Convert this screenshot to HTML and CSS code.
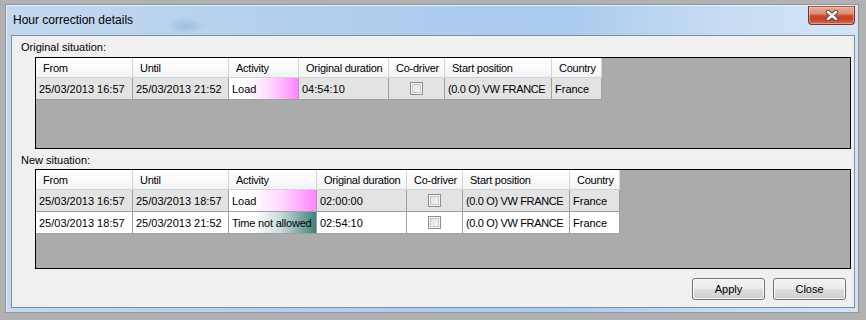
FILE: index.html
```html
<!DOCTYPE html>
<html>
  <head>
    <link rel="stylesheet" href="styles.css">
  </head>
  <body>
    <div class="window">
      <div class="titlebar">
        <div class="title">Hour correction details</div>
        <div class="close-btn">
          <svg width="14" height="11" viewBox="0 0 14 11">
            <path d="M3 2 L11 9 M11 2 L3 9" stroke="#4a4a4a" stroke-width="4.4" stroke-linecap="round" fill="none" />
            <path d="M3 2 L11 9 M11 2 L3 9" stroke="#ffffff" stroke-width="2.4" stroke-linecap="round" fill="none" />
          </svg>
        </div>
      </div>

      <div class="client">
        <div class="section-label">Original situation:</div>
        <div class="grid grid-original">
          <div class="row header">
            <div class="cell c-from">From</div>
            <div class="cell c-until">Until</div>
            <div class="cell c-act1">Activity</div>
            <div class="cell c-dur">Original duration</div>
            <div class="cell c-co">Co-driver</div>
            <div class="cell c-pos">Start position</div>
            <div class="cell c-country">Country</div>
          </div>
          <div class="row data shaded">
            <div class="cell c-from">25/03/2013 16:57</div>
            <div class="cell c-until">25/03/2013 21:52</div>
            <div class="cell c-act1 load">Load</div>
            <div class="cell c-dur">04:54:10</div>
            <div class="cell c-co"><span class="checkbox"></span></div>
            <div class="cell c-pos">(0.0 O) VW FRANCE</div>
            <div class="cell c-country">France</div>
          </div>
        </div>

        <div class="section-label second">New situation:</div>
        <div class="grid grid-new">
          <div class="row header">
            <div class="cell c-from">From</div>
            <div class="cell c-until">Until</div>
            <div class="cell c-act2">Activity</div>
            <div class="cell c-dur">Original duration</div>
            <div class="cell c-co">Co-driver</div>
            <div class="cell c-pos">Start position</div>
            <div class="cell c-country">Country</div>
          </div>
          <div class="row data shaded">
            <div class="cell c-from">25/03/2013 16:57</div>
            <div class="cell c-until">25/03/2013 18:57</div>
            <div class="cell c-act2 load">Load</div>
            <div class="cell c-dur">02:00:00</div>
            <div class="cell c-co"><span class="checkbox"></span></div>
            <div class="cell c-pos">(0.0 O) VW FRANCE</div>
            <div class="cell c-country">France</div>
          </div>
          <div class="row data">
            <div class="cell c-from">25/03/2013 18:57</div>
            <div class="cell c-until">25/03/2013 21:52</div>
            <div class="cell c-act2 not-allowed">Time not allowed</div>
            <div class="cell c-dur">02:54:10</div>
            <div class="cell c-co"><span class="checkbox"></span></div>
            <div class="cell c-pos">(0.0 O) VW FRANCE</div>
            <div class="cell c-country">France</div>
          </div>
        </div>

        <div class="buttons">
          <button class="btn">Apply</button>
          <button class="btn">Close</button>
        </div>
      </div>
    </div>
  </body>
</html>
```

FILE: styles.css
```css
body {
  margin: 0;
  background: #b1b1b1;
  font-family: "Liberation Sans", Arial, sans-serif;
  font-size: 11px;
  color: #000;
}

.window {
  margin: 4px 0 0 5px;
  width: 854px;
  height: 309px;
  box-sizing: border-box;
  border: 1px solid #8d98a4;
  background:
    radial-gradient(ellipse 20px 8px at 180px 21px, rgba(140, 178, 218, 0.65), rgba(140, 178, 218, 0) 100%),
    linear-gradient(to right, #c3d8ee 0%, #b2cfee 35%, #a9cbee 65%, #c8ddf3 85%, #d3e4f5 100%);
  box-shadow: inset 1px 1px 0 #e4eef9;
  display: flex;
  flex-direction: column;
}

.titlebar {
  height: 30px;
  display: flex;
  justify-content: space-between;
  align-items: center;
  padding-left: 7px;
  padding-right: 3px;
}

.title {
  font-size: 12px;
  color: #000;
  margin-top: -1px;
}

.close-btn {
  align-self: flex-start;
  margin-top: 1px;
  width: 47px;
  height: 19px;
  box-sizing: border-box;
  border: 1px solid #7a3526;
  border-top-color: #9a5a4c;
  border-radius: 0 0 4px 4px;
  background: linear-gradient(#e8aa98 0%, #dc8d76 40%, #c8472d 52%, #c4452c 75%, #d37058 100%);
  box-shadow: inset 0 0 0 1px rgba(255, 210, 195, 0.45);
  display: flex;
  align-items: center;
  justify-content: center;
}

.client {
  margin-left: 5px;
  width: 844px;
  height: 273px;
  box-sizing: border-box;
  border: 1px solid #7f8fa1;
  background: #f0f0f0;
  padding: 5px 3px 0 9px;
  display: flex;
  flex-direction: column;
}

.section-label {
  line-height: 13px;
  height: 13px;
}

.section-label.second {
  margin-top: 5px;
}

.grid {
  margin-left: 14px;
  box-sizing: border-box;
  border: 1px solid #000;
  background: #ababab;
}

.grid-original {
  margin-top: 3px;
  height: 92px;
}

.grid-new {
  margin-top: 2px;
  height: 100px;
}

.row {
  display: flex;
}

.cell {
  box-sizing: border-box;
  white-space: nowrap;
  overflow: hidden;
  display: flex;
  align-items: center;
}

.header .cell {
  height: 20px;
  padding-left: 7px;
  letter-spacing: -0.25px;
  background: linear-gradient(#ffffff 0%, #fbfbfc 50%, #f1f2f4 100%);
  border-right: 1px solid #d5d5d5;
  border-bottom: 1px solid #d5d5d5;
}

.data .cell {
  height: 22px;
  padding-left: 3px;
  background: #ffffff;
  border-right: 1px solid #a0a0a0;
  border-bottom: 1px solid #a0a0a0;
}

.data .c-pos {
  letter-spacing: -0.35px;
}

.data.shaded .cell {
  background: #e3e3e3;
}

.data .cell.load {
  background: linear-gradient(to right, #ffffff 25%, #ffd8ff 60%, #ff85ff 100%);
}

.data .cell.not-allowed {
  letter-spacing: -0.2px;
  background: linear-gradient(to right, #ffffff 30%, #c6dad9 60%, #3f807d 100%);
}

.data .c-co {
  justify-content: center;
  padding-left: 0;
}

.checkbox {
  width: 13px;
  height: 13px;
  box-sizing: border-box;
  border: 1px solid #8e8f8f;
  background: linear-gradient(135deg, #dcdcdc 0%, #eeeeee 60%, #fafafa 100%);
  box-shadow: inset 0 0 0 1px #f4f4f4, inset 0 0 0 2px #c7c7c7;
}

.c-from { width: 97px; }
.c-until { width: 96px; }
.c-act1 { width: 70px; }
.c-act2 { width: 88px; }
.c-dur { width: 90px; }
.c-co { width: 56px; }
.c-pos { width: 107px; }
.c-country { width: 50px; }

.buttons {
  margin-top: 9px;
  margin-right: 5px;
  display: flex;
  justify-content: flex-end;
  gap: 8px;
}

.btn {
  width: 73px;
  height: 22px;
  padding: 0;
  box-sizing: border-box;
  border: 1px solid #707070;
  border-radius: 3px;
  background: linear-gradient(#f2f2f2 0%, #ebebeb 48%, #dddddd 52%, #cfcfcf 100%);
  box-shadow: inset 0 0 0 1px #fcfcfc;
  font-family: "Liberation Sans", Arial, sans-serif;
  font-size: 11px;
  color: #000;
}
```
